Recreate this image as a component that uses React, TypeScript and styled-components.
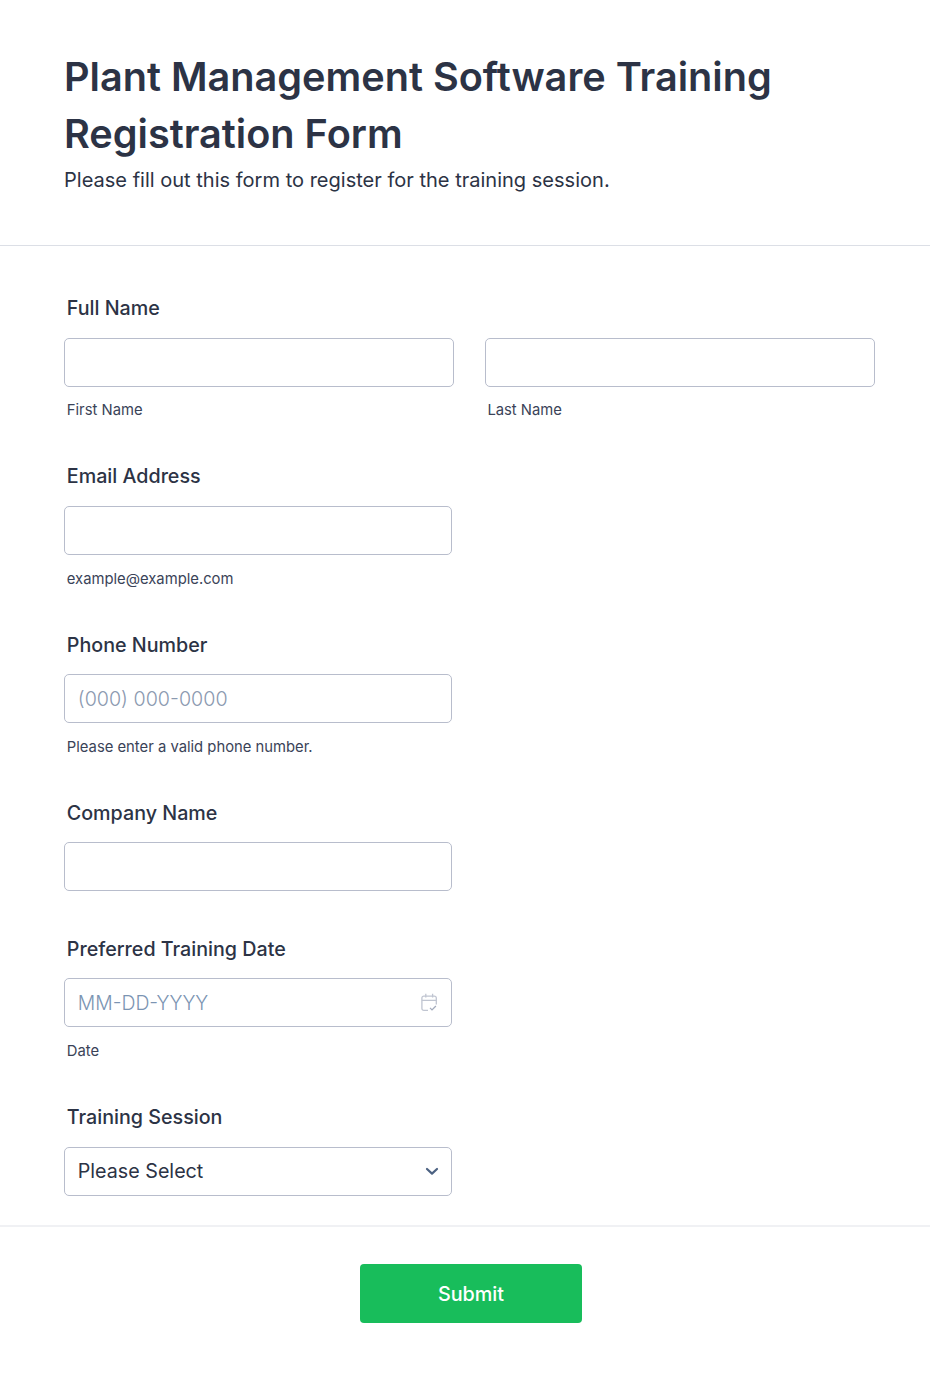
import React from 'react';
import styled, { createGlobalStyle } from 'styled-components';

const GlobalStyle = createGlobalStyle`
  html, body {
    margin: 0;
    padding: 0;
    background: #fff;
    font-family: Inter, "Liberation Sans", sans-serif;
    color: #2c3345;
  }
  * {
    box-sizing: border-box;
  }
`;

const App = () => {
  return (
    <Page>
      <GlobalStyle />
      <Header>
        <Title>Plant Management Software Training Registration Form</Title>
        <Subtitle>Please fill out this form to register for the training session.</Subtitle>
      </Header>
      <Fields>
        <Field>
          <Label>Full Name</Label>
          <NameRow>
            <div>
              <Input />
              <Sub>First Name</Sub>
            </div>
            <div>
              <Input />
              <Sub>Last Name</Sub>
            </div>
          </NameRow>
        </Field>
        <Field>
          <Label>Email Address</Label>
          <Narrow>
            <Input />
            <Sub>example@example.com</Sub>
          </Narrow>
        </Field>
        <Field>
          <Label>Phone Number</Label>
          <Narrow>
            <Input placeholder="(000) 000-0000" />
            <Sub>Please enter a valid phone number.</Sub>
          </Narrow>
        </Field>
        <Field $short>
          <Label>Company Name</Label>
          <Narrow>
            <Input />
          </Narrow>
        </Field>
        <Field>
          <Label>Preferred Training Date</Label>
          <Narrow>
            <DateBox>
              <DateText>MM-DD-YYYY</DateText>
              <CalendarIcon />
            </DateBox>
            <Sub>Date</Sub>
          </Narrow>
        </Field>
        <Field $short>
          <Label>Training Session</Label>
          <Narrow>
            <SelectBox>
              <span>Please Select</span>
              <ChevronIcon />
            </SelectBox>
          </Narrow>
        </Field>
      </Fields>
      <Footer>
        <SubmitButton type="button">Submit</SubmitButton>
      </Footer>
    </Page>
  );
};

export default App;

const CalendarIcon = () => (
  <svg width="17" height="19" viewBox="0 0 17 19" fill="none" stroke="#c0c5d1" strokeWidth="1.3">
    <path d="M7 17.4H2.8a1.9 1.9 0 0 1-1.9-1.9V5a1.9 1.9 0 0 1 1.9-1.9h10.6A1.9 1.9 0 0 1 15.3 5v6.4" />
    <path d="M.9 7.4h14.4M4.8 .8v3.8M11.6 .8v3.8" />
    <path d="M9 14.9l2 2 3.9-3.9" stroke="#a3abbc" />
  </svg>
);

const ChevronIcon = () => (
  <svg width="14" height="9" viewBox="0 0 14 9" fill="none" stroke="#4c6282" strokeWidth="2.2" strokeLinecap="round" strokeLinejoin="round">
    <path d="M2 2l5 4.6L12 2" />
  </svg>
);

const Page = styled.div`
  width: 930px;
  min-height: 1373px;
  background: #fff;
`;

const Header = styled.div`
  height: 246px;
  padding: 49px 64px 0;
  border-bottom: 1px solid #dcdfe6;
`;

const Title = styled.h1`
  margin: 0;
  font-size: 39.65px;
  line-height: 57px;
  font-weight: 600;
  color: #2c3345;
`;

const Subtitle = styled.p`
  margin: 3px 0 0;
  font-size: 20.05px;
  line-height: 28px;
  font-weight: 400;
  color: #2c3345;
`;

const Fields = styled.div`
  height: 981px;
  padding: 49.35px 55px 0 64.4px;
  border-bottom: 2px solid #f0f1f4;
`;

const Field = styled.div<{ $short?: boolean }>`
  height: ${(p) => (p.$short ? 136.2 : 168.1)}px;
`;

const Label = styled.div`
  padding-left: 2.4px;
  height: 26px;
  margin-bottom: 16.65px;
  font-size: 19.7px;
  line-height: 26px;
  font-weight: 500;
  color: #2c3345;
`;

const NameRow = styled.div`
  display: grid;
  grid-template-columns: 390px 390px;
  column-gap: 30.6px;
`;

const Narrow = styled.div`
  width: 387.6px;
`;

const Input = styled.input`
  display: block;
  width: 100%;
  height: 49px;
  padding: 0 12.4px;
  border: 1px solid #b8bdcc;
  border-radius: 5px;
  outline: none;
  background: #fff;
  font-family: inherit;
  font-size: 19.7px;
  color: #2c3345;

  &::placeholder {
    color: #8b99b0;
    opacity: 1;
    font-weight: 300;
  }
`;

const Sub = styled.div`
  padding-left: 2.4px;
  margin-top: 13.45px;
  font-size: 14.8px;
  line-height: 20px;
  color: #3a4358;
`;

const DateBox = styled.div`
  display: flex;
  align-items: center;
  justify-content: space-between;
  height: 49px;
  padding: 0 13px 0 12.4px;
  border: 1px solid #b8bdcc;
  border-radius: 5px;
`;

const DateText = styled.span`
  padding-top: 1px;
  font-size: 19.4px;
  font-weight: 300;
  color: #7b94b2;
`;

const SelectBox = styled.div`
  display: flex;
  align-items: center;
  justify-content: space-between;
  height: 49px;
  padding: 0 11.5px 0 12.4px;
  border: 1px solid #b8bdcc;
  border-radius: 5px;
  font-size: 19.7px;
  color: #2c3345;
`;

const Footer = styled.div`
  display: flex;
  justify-content: center;
  padding: 37px 0 50px 12px;
`;

const SubmitButton = styled.button`
  width: 222px;
  height: 59px;
  border: none;
  border-radius: 4px;
  background: #18bd5b;
  color: #fff;
  font-family: inherit;
  font-size: 19.8px;
  font-weight: 500;
`;
